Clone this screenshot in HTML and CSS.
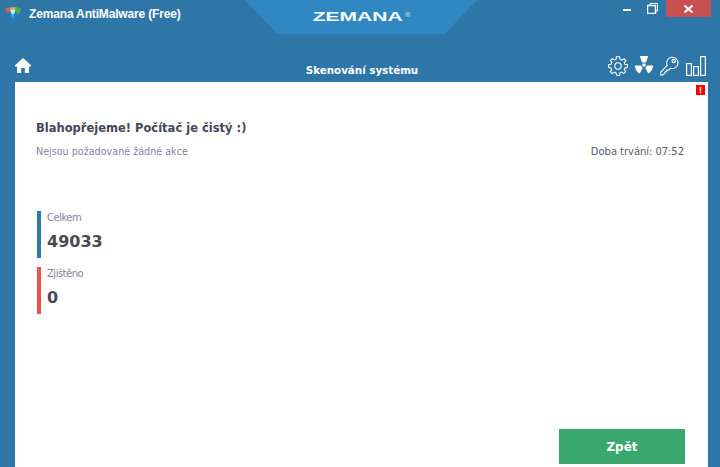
FILE: index.html
```html
<!DOCTYPE html>
<html lang="en">
<head>
    <meta charset="UTF-8">
    <meta name="viewport" content="width=device-width, initial-scale=1.0">
    <title>Zemana AntiMalware (Free)</title>
    <link rel="stylesheet" href="styles.css">
</head>
<body>
    <div class="window">
        <div class="titlebar">
            <div class="app-name">
                <svg class="app-icon" width="16" height="16" viewBox="0 0 16 16">
                    <path d="M0 1.5 L4.5 0.5 L5 5 L2 6 Z" fill="#d9603f"/>
                    <path d="M4.5 0.5 L11 0 L10.5 2.5 L5 2.8 Z" fill="#e3b23c"/>
                    <path d="M11 0 L16 1.5 L13.5 8 L10 4 Z" fill="#4fa84e"/>
                    <path d="M2 6 L5.5 5.5 L9.5 5 L13.5 8 L8 16 Z" fill="#1f7fb8"/>
                    <path d="M5 2.8 L10.5 2.5 L9.5 6 L7.5 9 Z" fill="#d6e8f0"/>
                    <path d="M6 8 L9.5 6 L8 12 Z" fill="#3fb0dc"/>
                </svg>
                <span>Zemana AntiMalware (Free)</span>
            </div>
            <div class="brand"><span class="brand-text">ZEMANA</span><span class="brand-reg">®</span></div>
            <div class="window-buttons">
                <span class="minimize"></span>
                <svg class="restore" width="11" height="11" viewBox="0 0 11 11" fill="none" stroke="#fff">
                    <rect x="0.5" y="2.5" width="8" height="8" stroke-width="1.4"/>
                    <path d="M3 2.5 V0.5 H10.5 V8 H8.5"/>
                </svg>
                <div class="close">
                    <svg width="9" height="8" viewBox="0 0 9 8" stroke="#fff" stroke-width="2"><path d="M0.5 0.5 L8.5 7.5 M8.5 0.5 L0.5 7.5"/></svg>
                </div>
            </div>
        </div>

        <div class="navbar">
            <svg class="home" width="16" height="15" viewBox="0 0 16 15" fill="#fff">
                <path d="M8 0 L16 7.2 V8.4 H14 V15 H9.8 V10 H6.2 V15 H2 V8.4 H0 V7.2 Z"/>
            </svg>
            <div class="page-title">Skenování systému</div>
            <div class="nav-icons">
                <svg width="20" height="20" viewBox="0 0 20 20" fill="none" stroke="#fff" stroke-width="1.1">
                    <circle cx="10" cy="10" r="3.2"/>
                    <path d="M8.4 0.8 H11.6 L12.1 3.4 L14 4.2 L16.2 2.7 L17.9 4.7 L16.3 6.6 L17 8.4 L19.4 8.8 V11.4 L17 11.9 L16.3 13.6 L17.7 15.7 L15.6 17.6 L13.7 16.1 L12 16.8 L11.6 19.2 H8.6 L8 16.8 L6.2 16.1 L4.3 17.6 L2.3 15.6 L3.7 13.6 L3 11.9 L0.6 11.4 V8.6 L3 8.2 L3.8 6.4 L2.3 4.5 L4.2 2.6 L6.2 4 L8 3.4 Z"/>
                </svg>
                <svg width="18" height="18" viewBox="0 0 18 18" fill="#fff">
                    <path d="M4.8 0 H13.2 L11 6.4 H7 Z"/>
                    <circle cx="9" cy="9" r="1.8"/>
                    <path d="M0 9.6 L6.2 9.4 C6.4 10.6 7 11.4 7.8 11.8 L4.8 17.4 C2 16.6 0.2 13.4 0 9.6 Z"/>
                    <path d="M18 9.6 L11.8 9.4 C11.6 10.6 11 11.4 10.2 11.8 L13.2 17.4 C16 16.6 17.8 13.4 18 9.6 Z"/>
                </svg>
                <svg width="19" height="20" viewBox="0 0 20 20" fill="none" stroke="#fff" stroke-width="1.1">
                    <path d="M7.6 9.4 A6 6 0 1 1 11 12.4 L8.8 14.4 H7 V16 H5.4 L5 17.6 L3 19.4 H0.7 V16.6 Z"/>
                    <path d="M13.6 3.6 L16 6" stroke-dasharray="1 1"/>
                    <circle cx="14.4" cy="4.8" r="1.8"/>
                </svg>
                <svg width="20" height="20" viewBox="0 0 20 20" fill="none" stroke="#fff" stroke-width="1.2">
                    <rect x="0.6" y="7.6" width="4.8" height="11.8"/>
                    <rect x="7.6" y="10.6" width="4.8" height="8.8"/>
                    <rect x="14.6" y="0.6" width="4.8" height="18.8"/>
                </svg>
            </div>
        </div>

        <div class="content">
            <span class="alert-badge">!</span>
            <h1>Blahopřejeme! Počítač je čistý :)</h1>
            <div class="status-row">
                <span class="muted">Nejsou požadované žádné akce</span>
                <span class="duration">Doba trvání: 07:52</span>
            </div>
            <div class="stats">
                <div class="stat stat-total">
                    <div class="stat-label">Celkem</div>
                    <div class="stat-value">49033</div>
                </div>
                <div class="stat stat-found">
                    <div class="stat-label">Zjištěno</div>
                    <div class="stat-value">0</div>
                </div>
            </div>
            <div class="actions">
                <button type="button">Zpět</button>
            </div>
        </div>
    </div>
</body>
</html>
```

FILE: styles.css
```css
html, body {
    margin: 0;
    padding: 0;
    height: 100%;
    overflow: hidden;
}
body {
    font-family: "DejaVu Sans", sans-serif;
    background: #2f76a8;
}
.window {
    display: flex;
    flex-direction: column;
    height: 467px;
    background: #2f76a8;
}
.titlebar {
    display: grid;
    grid-template-columns: 245px 232px 1fr;
    height: 34px;
    flex: none;
}
.app-name {
    display: flex;
    align-items: flex-start;
    padding: 7px 0 0 5px;
    gap: 8px;
    color: #fff;
    font-family: "Liberation Sans", Arial, sans-serif;
    font-weight: bold;
    font-size: 12px;
    letter-spacing: -0.16px;
    line-height: 15px;
}
.app-icon {
    flex: none;
}
.brand {
    display: flex;
    justify-content: center;
    align-items: flex-start;
    padding-top: 11px;
    background: #2f88c2;
    clip-path: polygon(0 0, 100% 0, 86% 100%, 14% 100%);
    color: #fff;
}
.brand-text {
    font-family: "Liberation Sans", Arial, sans-serif;
    font-weight: bold;
    font-size: 12px;
    line-height: 12px;
    transform: scaleX(1.75);
    margin: 0 21px;
}
.brand-reg {
    font-size: 7px;
    line-height: 8px;
    opacity: 0.7;
}
.window-buttons {
    display: flex;
    align-items: flex-start;
    justify-content: flex-end;
    padding-right: 9px;
}
.minimize {
    width: 8px;
    height: 2px;
    margin-top: 9px;
    background: #fff;
}
.restore {
    margin: 3px 8px 0 16px;
}
.close {
    display: flex;
    justify-content: center;
    align-items: center;
    width: 45px;
    height: 17px;
    background: #c75050;
}
.navbar {
    display: grid;
    grid-template-columns: 1fr auto 1fr;
    height: 48px;
    flex: none;
    padding: 0 14px 0 15px;
}
.home {
    margin-top: 24px;
}
.page-title {
    align-self: end;
    margin: 0 0 5px 3px;
    color: #fff;
    font-weight: bold;
    font-size: 10.3px;
    line-height: 13px;
}
.nav-icons {
    display: flex;
    justify-content: flex-end;
    align-items: flex-start;
    gap: 7px;
    padding-top: 22px;
}
.content {
    position: relative;
    flex: 1;
    margin: 0 12px 0 15px;
    padding: 38px 23px 3px 21px;
    display: flex;
    flex-direction: column;
    background: #fff;
}
.alert-badge {
    position: absolute;
    top: 3px;
    right: 3px;
    width: 9px;
    height: 10px;
    background: #f00;
    color: #fff;
    font-family: "Liberation Sans", Arial, sans-serif;
    font-weight: bold;
    font-size: 9px;
    line-height: 10px;
    text-align: center;
}
h1 {
    margin: 0;
    color: #44465a;
    font-size: 11.5px;
    line-height: 16px;
    font-weight: bold;
}
.status-row {
    display: flex;
    justify-content: space-between;
    margin-top: 9px;
    padding-right: 1px;
    font-size: 10px;
    line-height: 14px;
}
.muted {
    color: #85859c;
    font-size: 9.6px;
}
.duration {
    color: #5a5a66;
    letter-spacing: -0.05px;
}
.stats {
    margin: 52px 0 0 1px;
    display: flex;
    flex-direction: column;
    gap: 9px;
}
.stat {
    height: 47px;
    padding-left: 6px;
    border-left: 4px solid #2b7cab;
}
.stat-found {
    border-left-color: #f25050;
}
.stat-label {
    color: #85859c;
    font-size: 10px;
    letter-spacing: -0.5px;
    line-height: 14px;
}
.stat-value {
    margin-top: 7px;
    color: #4a4a52;
    font-size: 16px;
    font-weight: bold;
    line-height: 20px;
}
.actions {
    margin-top: auto;
    display: flex;
    justify-content: flex-end;
}
button {
    width: 126px;
    height: 35px;
    border: none;
    background: #3aa76f;
    color: #fff;
    font-family: "DejaVu Sans", sans-serif;
    font-size: 12px;
    font-weight: bold;
}
```
